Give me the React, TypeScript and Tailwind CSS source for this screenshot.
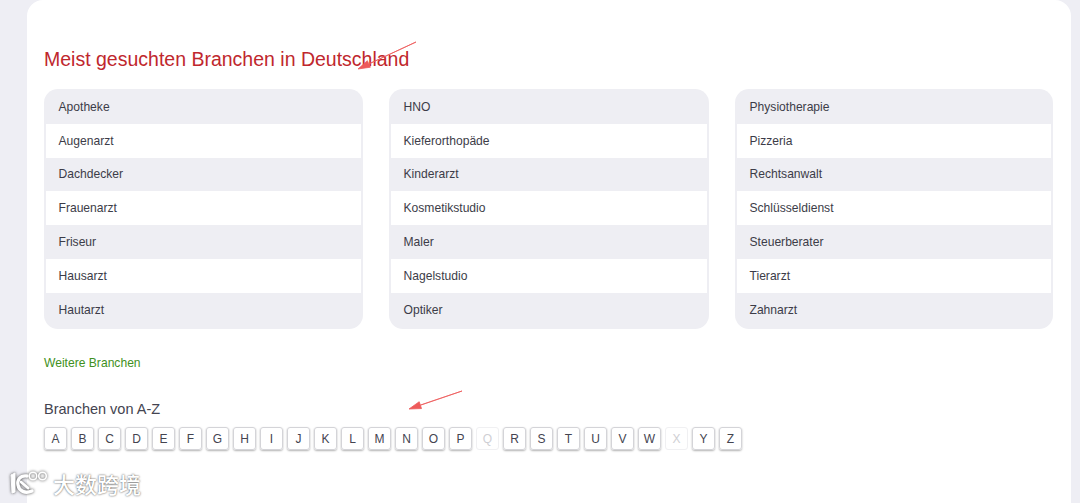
const col1 = ["Apotheke","Augenarzt","Dachdecker","Frauenarzt","Friseur","Hausarzt","Hautarzt"];
const col2 = ["HNO","Kieferorthopäde","Kinderarzt","Kosmetikstudio","Maler","Nagelstudio","Optiker"];
const col3 = ["Physiotherapie","Pizzeria","Rechtsanwalt","Schlüsseldienst","Steuerberater","Tierarzt","Zahnarzt"];
const letters = "ABCDEFGHIJKLMNOPQRSTUVWXYZ".split("");

function List({ items }: { items: string[] }) {
  return (
    <ul className="h-[240px] rounded-[14px] bg-[#eeeef3] px-[2px] pt-[1px] overflow-hidden">
      {items.map((t, i) => (
        <li
          key={t}
          className={`h-[33.8px] flex items-center pl-[12.5px] text-[12.1px] text-[#3c3c48] ${i % 2 === 1 ? "bg-white" : ""}`}
        >
          {t}
        </li>
      ))}
    </ul>
  );
}

function Arrow({ x1, y1, x2, y2, className }: { x1: number; y1: number; x2: number; y2: number; className: string }) {
  const a = Math.atan2(y2 - y1, x2 - x1);
  const l = 12, w = 3.6;
  const bx = x2 - l * Math.cos(a), by = y2 - l * Math.sin(a);
  const px = -Math.sin(a) * w, py = Math.cos(a) * w;
  return (
    <svg className={className} width="1080" height="503" viewBox="0 0 1080 503">
      <path d={`M${x1} ${y1} L${bx} ${by} L${bx + px} ${by + py} L${x2} ${y2} L${bx - px} ${by - py} L${bx} ${by} Z`} fill="#ee5a5a" stroke="#ee5a5a" strokeWidth="0.8" strokeLinejoin="round" />
    </svg>
  );
}

export default function App() {
  return (
    <div className="relative h-[503px] w-[1080px] overflow-hidden bg-[#eeeef4] pl-[27px] pr-[9px] font-['Liberation_Sans',Arial,sans-serif]">
      <div className="h-full rounded-t-[16px] bg-white pl-[17px] pr-[17px] pt-[46px]">
        <h2 className="text-[19.5px] leading-[26px] text-[#c0272d]">Meist gesuchten Branchen in Deutschland</h2>
        <div className="mt-[17px] grid grid-cols-[319px_320px_318px] gap-x-[26px]">
          <List items={col1} />
          <List items={col2} />
          <List items={col3} />
        </div>
        <a className="mt-[27px] block text-[12.1px] leading-[14px] text-[#3f9022]">Weitere Branchen</a>
        <h3 className="mt-[30px] text-[14.5px] leading-[18px] text-[#444450]">Branchen von A-Z</h3>
        <div className="mt-[9px] flex gap-[4px]">
          {letters.map((l) => {
            const off = l === "Q" || l === "X";
            return (
              <span
                key={l}
                className={`flex h-[23px] w-[23px] items-center justify-center rounded-[3px] border text-[12px] ${
                  off
                    ? "border-[#f0f0f2] text-[#cfcfd4]"
                    : "border-[#d4d4d8] text-[#444450] shadow-[0_1px_2px_rgba(0,0,0,0.3)]"
                }`}
              >
                {l}
              </span>
            );
          })}
        </div>
      </div>

      <Arrow x1={416} y1={42} x2={358} y2={69} className="absolute left-0 top-0 pointer-events-none" />
      <Arrow x1={462} y1={391} x2={409} y2={409} className="absolute left-0 top-0 pointer-events-none" />

      <div className="absolute left-[9px] top-[470px] flex items-center gap-[4px]">
        <svg width="40" height="26" viewBox="0 0 40 26" fill="none" stroke="#ffffff" className="drop-shadow-[0_0_1.5px_rgba(70,70,70,1)]">
          <path d="M2 5 L6 3 L6 22 L3 23 Z" fill="#ffffff" strokeWidth="1" />
          <path d="M18 6 C11 5 8 10 9 15 C10 21 16 24 23 21" strokeWidth="3.4" strokeLinecap="round" />
          <path d="M12 12 L19 18" strokeWidth="2.8" strokeLinecap="round" />
          <circle cx="24" cy="6" r="3.8" strokeWidth="1.6" />
          <circle cx="33.5" cy="6" r="3.8" strokeWidth="1.6" />
        </svg>
        <span className="font-['Noto_Sans_CJK_SC',sans-serif] text-[22px] leading-[26px] font-medium text-white [text-shadow:0_0_2px_rgba(60,60,60,1)]">大数跨境</span>
      </div>
    </div>
  );
}
